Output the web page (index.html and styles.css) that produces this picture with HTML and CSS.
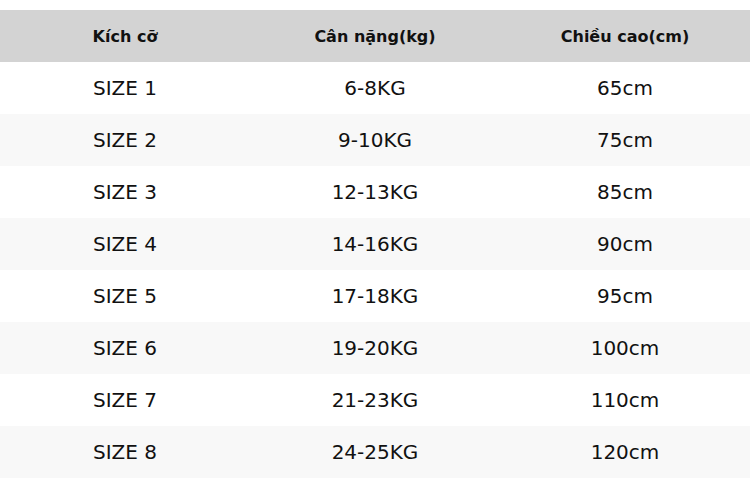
FILE: index.html
```html
<!DOCTYPE html>
<html lang="vi">
<head>
<meta charset="utf-8">
<link rel="stylesheet" href="styles.css">
</head>
<body>
<table class="size-table">
  <thead>
    <tr><th>Kích cỡ</th><th>Cân nặng(kg)</th><th>Chiều cao(cm)</th></tr>
  </thead>
  <tbody>
    <tr><td>SIZE 1</td><td>6-8KG</td><td>65cm</td></tr>
    <tr><td>SIZE 2</td><td>9-10KG</td><td>75cm</td></tr>
    <tr><td>SIZE 3</td><td>12-13KG</td><td>85cm</td></tr>
    <tr><td>SIZE 4</td><td>14-16KG</td><td>90cm</td></tr>
    <tr><td>SIZE 5</td><td>17-18KG</td><td>95cm</td></tr>
    <tr><td>SIZE 6</td><td>19-20KG</td><td>100cm</td></tr>
    <tr><td>SIZE 7</td><td>21-23KG</td><td>110cm</td></tr>
    <tr><td>SIZE 8</td><td>24-25KG</td><td>120cm</td></tr>
  </tbody>
</table>
</body>
</html>
```
FILE: styles.css
```css
html, body {
  margin: 0;
  padding: 0;
  background: #ffffff;
}
body {
  padding-top: 10px;
  font-family: "DejaVu Sans", sans-serif;
  color: #111111;
}
.size-table {
  width: 750px;
  border-collapse: collapse;
  table-layout: fixed;
}
.size-table th,
.size-table td {
  width: 250px;
  height: 52px;
  padding: 0;
  text-align: center;
  vertical-align: middle;
}
.size-table th {
  background: #d3d3d3;
  font-size: 16px;
  font-weight: bold;
}
.size-table td {
  font-size: 20px;
}
.size-table tbody tr:nth-child(even) {
  background: #f8f8f8;
}
```
